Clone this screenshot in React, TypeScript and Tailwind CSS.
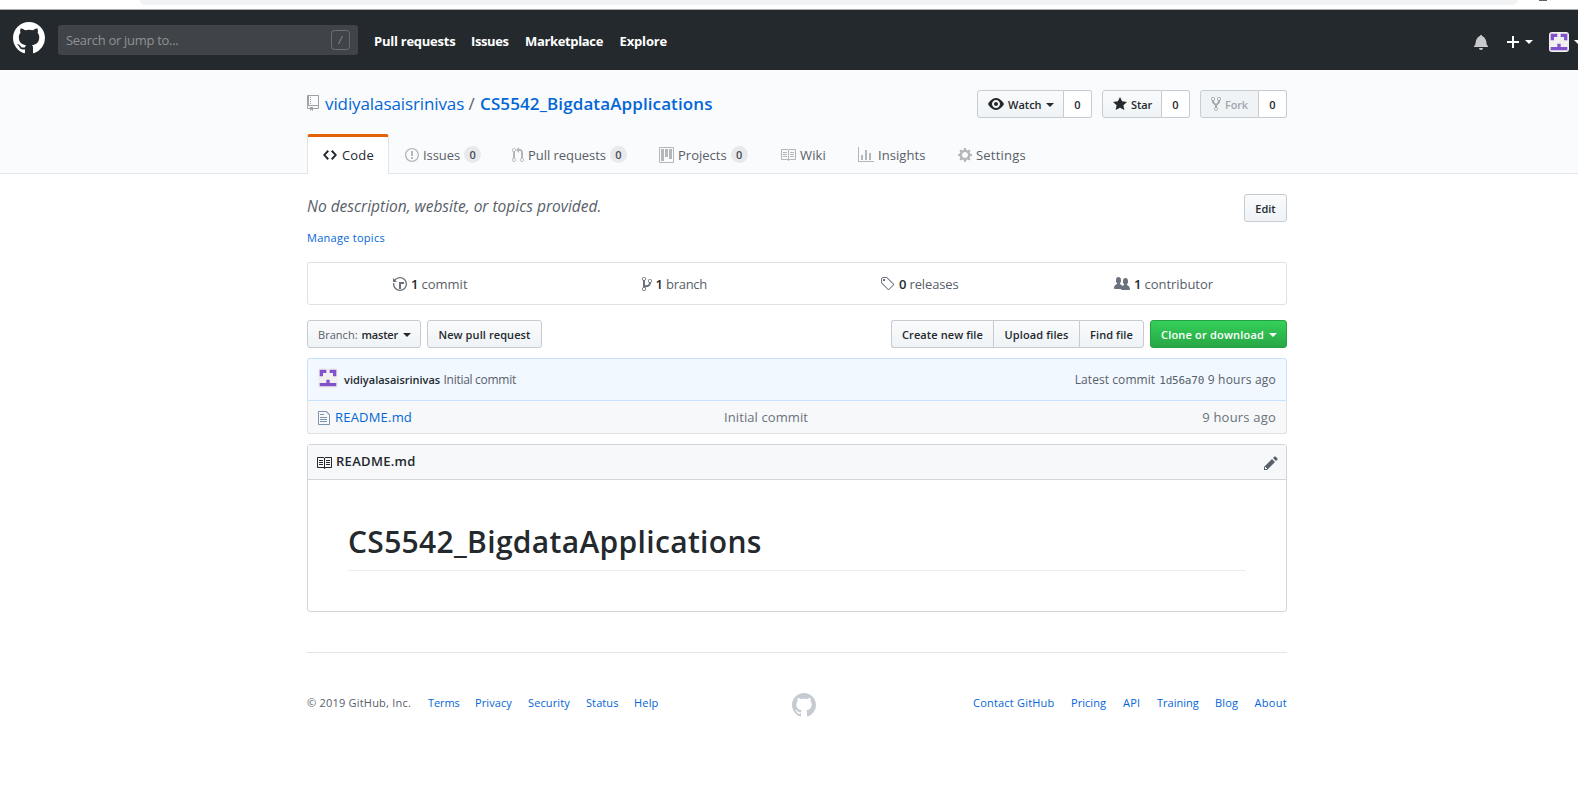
import React from "react";

const ICONS = {
  mark: [16, "M8 0C3.58 0 0 3.58 0 8c0 3.54 2.29 6.53 5.47 7.59.4.07.55-.17.55-.38 0-.19-.01-.82-.01-1.49-2.01.37-2.53-.49-2.69-.94-.09-.23-.48-.94-.82-1.13-.28-.15-.68-.52-.01-.53.63-.01 1.08.58 1.23.82.72 1.21 1.87.87 2.33.66.07-.52.28-.87.51-1.07-1.78-.2-3.64-.89-3.64-3.95 0-.87.31-1.59.82-2.15-.08-.2-.36-1.02.08-2.12 0 0 .67-.21 2.2.82.64-.18 1.32-.27 2-.27.68 0 1.36.09 2 .27 1.53-1.04 2.2-.82 2.2-.82.44 1.1.16 1.92.08 2.12.51.56.82 1.27.82 2.15 0 3.07-1.87 3.75-3.65 3.95.29.25.54.73.54 1.48 0 1.07-.01 1.93-.01 2.2 0 .21.15.46.55.38A8.013 8.013 0 0 0 16 8c0-4.42-3.58-8-8-8z"],
  repo: [12, "M4 9H3V8h1v1zm0-3H3v1h1V6zm0-2H3v1h1V4zm0-2H3v1h1V2zm8-1v12c0 .55-.45 1-1 1H6v2l-1.5-1.5L3 16v-2H1c-.55 0-1-.45-1-1V1c0-.55.45-1 1-1h10c.55 0 1 .45 1 1zm-1 10H1v2h2v-1h3v1h5v-2zm0-10H2v9h9V1z"],
  eye: [16, "M8.06 2C3 2 0 8 0 8s3 6 8.06 6C13 14 16 8 16 8s-3-6-7.94-6zM8 12c-2.2 0-4-1.78-4-4 0-2.2 1.8-4 4-4 2.22 0 4 1.8 4 4 0 2.22-1.78 4-4 4zm2-4c0 1.11-.89 2-2 2-1.11 0-2-.89-2-2 0-1.11.89-2 2-2 1.11 0 2 .89 2 2z"],
  star: [14, "M14 6l-4.9-.64L7 1 4.9 5.36 0 6l3.6 3.26L2.67 14 7 11.67 11.33 14l-.93-4.74L14 6z"],
  fork: [10, "M8 1a1.993 1.993 0 0 0-1 3.72V6L5 8 3 6V4.72A1.993 1.993 0 0 0 2 1a1.993 1.993 0 0 0-1 3.72V6.5l3 3v1.78A1.993 1.993 0 0 0 5 15a1.993 1.993 0 0 0 1-3.72V9.5l3-3V4.72A1.993 1.993 0 0 0 8 1zM2 4.2C1.34 4.2.8 3.65.8 3c0-.65.55-1.2 1.2-1.2.65 0 1.2.55 1.2 1.2 0 .65-.55 1.2-1.2 1.2zm3 10c-.66 0-1.2-.55-1.2-1.2 0-.65.55-1.2 1.2-1.2.65 0 1.2.55 1.2 1.2 0 .65-.55 1.2-1.2 1.2zm3-10c-.66 0-1.2-.55-1.2-1.2 0-.65.55-1.2 1.2-1.2.65 0 1.2.55 1.2 1.2 0 .65-.55 1.2-1.2 1.2z"],
  code: [14, "M9.5 3L8 4.5 11.5 8 8 11.5 9.5 13 14 8 9.5 3zm-5 0L0 8l4.5 5L6 11.5 2.5 8 6 4.5 4.5 3z"],
  issue: [14, "M7 2.3c3.14 0 5.7 2.56 5.7 5.7s-2.56 5.7-5.7 5.7A5.71 5.71 0 0 1 1.3 8c0-3.14 2.56-5.7 5.7-5.7zM7 1C3.14 1 0 4.14 0 8s3.14 7 7 7 7-3.14 7-7-3.14-7-7-7zm1 3H6v5h2V4zm0 6H6v2h2v-2z"],
  pull: [12, "M11 11.28V5c-.03-.78-.34-1.47-.94-2.06C9.46 2.35 8.78 2.03 8 2H7V0L4 3l3 3V4h1c.27.02.48.11.69.31.21.2.3.42.31.69v6.28A1.993 1.993 0 0 0 10 15a1.993 1.993 0 0 0 1-3.72zm-1 2.92c-.66 0-1.2-.55-1.2-1.2 0-.65.55-1.2 1.2-1.2.65 0 1.2.55 1.2 1.2 0 .65-.55 1.2-1.2 1.2zM4 3c0-1.11-.89-2-2-2a1.993 1.993 0 0 0-1 3.72v6.56A1.993 1.993 0 0 0 2 15a1.993 1.993 0 0 0 1-3.72V4.72c.59-.34 1-.98 1-1.72zm-.8 10c0 .66-.55 1.2-1.2 1.2-.65 0-1.2-.55-1.2-1.2 0-.65.55-1.2 1.2-1.2.65 0 1.2.55 1.2 1.2zM2 4.2C1.34 4.2.8 3.65.8 3c0-.65.55-1.2 1.2-1.2.65 0 1.2.55 1.2 1.2 0 .65-.55 1.2-1.2 1.2z"],
  project: [15, "M10 12h3V2h-3v10zm-4-2h3V2H6v8zm-4 4h3V2H2v12zm-1 1h13V1H1v14zM14 0H1a1 1 0 0 0-1 1v14a1 1 0 0 0 1 1h13a1 1 0 0 0 1-1V1a1 1 0 0 0-1-1z"],
  book: [16, "M3 5h4v1H3V5zm0 3h4V7H3v1zm0 2h4V9H3v1zm11-5h-4v1h4V5zm0 2h-4v1h4V7zm0 2h-4v1h4V9zm2-6v9c0 .55-.45 1-1 1H9.5l-1 1-1-1H2c-.55 0-1-.45-1-1V3c0-.55.45-1 1-1h5.5l1 1 1-1H15c.55 0 1 .45 1 1zm-8 .5L7.5 3H2v9h6V3.5zm7-.5H9.5l-.5.5V12h6V3z"],
  graph: [16, "M16 14v1H0V0h1v14h15zM5 13H3V8h2v5zm4 0H7V3h2v10zm4 0h-2V6h2v7z"],
  gear: [14, "M14 8.77v-1.6l-1.94-.64-.45-1.09.88-1.84-1.13-1.13-1.81.91-1.09-.45-.69-1.92h-1.6l-.63 1.94-1.11.45-1.84-.88-1.13 1.13.91 1.81-.45 1.09L0 7.23v1.59l1.94.64.45 1.09-.88 1.84 1.13 1.13 1.81-.91 1.09.45.69 1.92h1.59l.63-1.94 1.11-.45 1.84.88 1.13-1.13-.92-1.81.47-1.09L14 8.75v.02zM7 11c-1.66 0-3-1.34-3-3s1.34-3 3-3 3 1.34 3 3-1.34 3-3 3z"],
  history: [14, "M8 13H6V6h5v2H8v5zM7 1C4.81 1 2.87 2.02 1.59 3.59L0 2v4h4L2.5 4.5C3.55 3.17 5.17 2.3 7 2.3c3.14 0 5.7 2.56 5.7 5.7s-2.56 5.7-5.7 5.7A5.71 5.71 0 0 1 1.3 8c0-.34.03-.67.09-1H.08C.03 7.33 0 7.66 0 8c0 3.86 3.14 7 7 7s7-3.14 7-7-3.14-7-7-7z"],
  branch: [10, "M10 5c0-1.11-.89-2-2-2a1.993 1.993 0 0 0-1 3.72v.3c-.02.52-.23.98-.63 1.38-.4.4-.86.61-1.38.63-.83.02-1.48.16-2 .45V4.72a1.993 1.993 0 0 0-1-3.72C.88 1 0 1.89 0 3a2 2 0 0 0 1 1.72v6.56c-.59.35-1 .99-1 1.72 0 1.11.89 2 2 2 1.11 0 2-.89 2-2 0-.53-.2-1-.53-1.36.09-.06.48-.41.59-.47.25-.11.56-.17.94-.17 1.05-.05 1.95-.45 2.75-1.25S8.95 7.77 9 6.73h-.02C9.59 6.37 10 5.73 10 5zM2 1.8c.66 0 1.2.55 1.2 1.2 0 .65-.55 1.2-1.2 1.2C1.35 4.2.8 3.65.8 3c0-.65.55-1.2 1.2-1.2zm0 12.41c-.66 0-1.2-.55-1.2-1.2 0-.65.55-1.2 1.2-1.2.65 0 1.2.55 1.2 1.2 0 .65-.55 1.2-1.2 1.2zm6-8c-.66 0-1.2-.55-1.2-1.2 0-.65.55-1.2 1.2-1.2.65 0 1.2.55 1.2 1.2 0 .65-.55 1.2-1.2 1.2z"],
  tag: [15, "M7.73 1.73C7.26 1.26 6.62 1 5.96 1H3.5C2.13 1 1 2.13 1 3.5v2.47c0 .66.27 1.3.73 1.77l6.06 6.06c.39.39 1.02.39 1.41 0l4.59-4.59a.996.996 0 0 0 0-1.41L7.73 1.73zM2.38 7.09c-.31-.3-.47-.7-.47-1.13V3.5c0-.88.72-1.59 1.59-1.59h2.47c.42 0 .83.16 1.13.47l6.14 6.13-4.73 4.73-6.13-6.15zM3.01 3h2v2H3V3h.01z"],
  people: [16, "M16 12.999c0 .439-.45 1-1 1H7.995c-.539 0-.994-.447-.995-.999H1c-.54 0-1-.561-1-1 0-2.634 3-4 3-4s.229-.409 0-1c-.841-.621-1.058-.59-1-3 .058-2.419 1.367-3 2.5-3s2.442.58 2.5 3c.058 2.41-.159 2.379-1 3-.229.59 0 1 0 1s1.549.711 2.42 2.088C9.196 9.369 10 8.999 10 8.999s.229-.409 0-1c-.841-.62-1.058-.59-1-3 .058-2.419 1.367-3 2.5-3s2.437.581 2.495 3c.059 2.41-.158 2.38-1 3-.229.59 0 1 0 1s3.005 1.366 3.005 4z"],
  file: [12, "M6 5H2V4h4v1zM2 8h7V7H2v1zm0 2h7V9H2v1zm0 2h7v-1H2v1zm10-7.5V14c0 .55-.45 1-1 1H1c-.55 0-1-.45-1-1V2c0-.55.45-1 1-1h7.5L12 4.5zM11 5L8 2H1v12h10V5z"],
  pencil: [14, "M0 12v3h3l8-8-3-3-8 8zm3 2H1v-2h1v1h1v1zm10.3-9.3L12 6 9 3l1.3-1.3a.996.996 0 0 1 1.41 0l1.59 1.59c.39.39.39 1.02 0 1.41z"],
  bell: [14, "M14 12v1H0v-1l.73-.58c.77-.77.81-2.55 1.19-4.42C2.69 3.23 6 2 6 2c0-.55.45-1 1-1s1 .45 1 1c0 0 3.39 1.23 4.16 5 .38 1.88.42 3.66 1.19 4.42l.66.58H14zm-7 4c1.11 0 2-.89 2-2H5c0 1.11.89 2 2 2z"],
  plus: [12, "M12 9H7v5H5V9H0V7h5V2h2v5h5v2z"],
} as const;

function Icon({ name, size = 16, className = "" }: { name: keyof typeof ICONS; size?: number; className?: string }) {
  const [w, d] = ICONS[name];
  return (
    <svg className={`shrink-0 ${className}`} width={(w * size) / 16} height={size} viewBox={`0 0 ${w} 16`} fill="currentColor" fillRule="evenodd">
      <path d={d} />
    </svg>
  );
}

function Caret({ className = "" }: { className?: string }) {
  return <span className={`h-0 w-0 shrink-0 border-x-4 border-t-4 border-x-transparent border-t-current ${className}`} />;
}

function Avatar({ className = "" }: { className?: string }) {
  return (
    <svg className={`shrink-0 rounded-[3px] bg-[#f0f0f0] ${className}`} width="20" height="20" viewBox="0 0 12 12" fill="#8252cc">
      <path d="M1 1h4v2H3v2H1zM7 1h4v4H9V3H7zM5 7h2v2h4v2H1V9h4z" />
    </svg>
  );
}

function Counter({ className = "" }: { className?: string }) {
  return (
    <span className={`flex h-[17px] w-[17px] shrink-0 items-center justify-center rounded-full bg-[#1b1f23]/8 text-[11px] font-semibold text-[#444d56] ${className}`}>0</span>
  );
}

const BTN = "flex h-7 items-center border border-[#c6cbd1] bg-linear-to-b from-[#fafbfc] to-[#eff3f6] pt-px text-[11px] font-semibold text-[#24292e]";
const COUNT = "flex h-7 items-center justify-center rounded-r-[3px] border border-l-0 border-[#c6cbd1] bg-white pt-px text-[11px] font-semibold";

function Header() {
  return (
    <>
      <div className="flex h-[9px] items-start bg-white pl-[140px]">
        <div className="h-[5px] w-[1378px] rounded-b-[12px] bg-[#f1f3f4]" />
        <div className="ml-[21px] h-px w-[8px] bg-[#5f6368]" />
      </div>
      <div className="h-px bg-[#a9abad]" />
      <header className="flex h-[60px] items-center overflow-hidden bg-[#24292e] pl-[13px] text-white">
        <Icon name="mark" size={32} className="-mt-1" />
        <div className="ml-[13px] flex h-[30px] w-[300px] items-center rounded-[3px] bg-[#404448] pl-2 text-[13px] text-[#8f9295]">
          <span className="w-[265px] tracking-[-0.3px]">Search or jump to...</span>
          <svg width="19" height="20" fill="none" stroke="#6d7073">
            <rect x=".5" y=".5" width="18" height="19" rx="3" />
            <path d="M11.500 6l-4 8" stroke="#85888b" />
          </svg>
        </div>
        <nav className="flex pt-[2px] pl-4 text-[13px] font-bold">
          <span className="w-[97px] tracking-[-0.25px]">Pull requests</span>
          <span className="w-[54px] tracking-[-0.4px]">Issues</span>
          <span className="w-[94.500px] tracking-[-0.35px]">Marketplace</span>
          <span className="tracking-[-0.15px]">Explore</span>
        </nav>
        <div className="ml-auto flex w-[104px] shrink-0 items-center pt-1">
          <Icon name="bell" className="text-[#c8c9ca]" />
          <Icon name="plus" className="ml-[19px]" />
          <Caret className="ml-[6px]" />
          <Avatar className="ml-4" />
          <Caret className="ml-[5px]" />
        </div>
      </header>
    </>
  );
}

function Tab({ icon, label, box, count = false }: { icon: keyof typeof ICONS; label: string; box: string; count?: boolean }) {
  return (
    <span className={`flex items-center ${box}`}>
      <Icon name={icon} className="mt-[2px] mr-1 text-[#b4b7ba]" />
      <span className="pt-[2px]">{label}</span>
      {count && <Counter className="mt-px ml-1" />}
    </span>
  );
}

function RepoHead() {
  return (
    <div className="h-[104px] border-b border-[#e1e4e8] bg-[#fafbfc] pt-5">
      <div className="ml-[307px] w-[980px] text-[#24292e]">
        <div className="flex h-7 justify-between">
          <h1 className="flex h-[27px] items-center text-[17px]">
            <Icon name="repo" className="-mt-px mr-[6px] text-[#9da2a7]" />
            <span className="w-[143.500px] tracking-[-0.1px] text-[#0366d6]">vidiyalasaisrinivas</span>
            <span className="w-[11.500px] text-[#586069]">/</span>
            <span className="font-semibold tracking-[0.11px] text-[#0366d6]">CS5542_BigdataApplications</span>
          </h1>
          <div className="flex">
            <span className={`${BTN} w-[87px] rounded-l-[3px] pl-[10px]`}>
              <Icon name="eye" className="-mt-[2px]" />
              <span className="ml-1 w-[38px]">Watch</span>
              <Caret />
            </span>
            <span className={`${COUNT} w-[28px]`}>0</span>
            <span className={`${BTN} ml-[10px] w-[60px] rounded-l-[3px] pl-[10px]`}>
              <Icon name="star" className="-mt-[2px]" />
              <span className="ml-1 tracking-[-0.13px]">Star</span>
            </span>
            <span className={`${COUNT} w-[28px]`}>0</span>
            <span className="ml-[10px] flex h-7 w-[59px] items-center rounded-l-[3px] border border-[#c9cdd2] bg-[#eff3f6] pt-px pl-[10px] text-[11px] font-semibold text-[#a3a7ab]">
              <Icon name="fork" className="-mt-[2px]" />
              <span className="ml-1 tracking-[-0.16px]">Fork</span>
            </span>
            <span className={`${COUNT} w-[28px]`}>0</span>
          </div>
        </div>
        <div className="mt-4 flex h-10 text-[13px] text-[#586069]">
          <span className="flex h-10 w-[82px] items-center rounded-t-[3px] border-x border-t-[3px] border-x-[#e1e4e8] border-t-[#e36209] bg-white pb-[3px] pl-[15px] text-[#24292e]">
            <Icon name="code" className="mt-[2px] mr-[5px]" />
            <span className="pt-[2px] tracking-[0.18px]">Code</span>
          </span>
          <div className="flex h-10 items-center pl-4">
            <Tab icon="issue" label="Issues" count box="w-[107px] tracking-[-0.08px]" />
            <Tab icon="pull" label="Pull requests" count box="w-[147px] tracking-[-0.05px]" />
            <Tab icon="project" label="Projects" count box="w-[121px]" />
            <Tab icon="book" label="Wiki" box="w-[78px] tracking-[0.15px]" />
            <Tab icon="graph" label="Insights" box="w-[100px] tracking-[0.07px]" />
            <Tab icon="gear" label="Settings" box="tracking-[0.2px]" />
          </div>
        </div>
      </div>
    </div>
  );
}

function Stat({ icon, count, label, box }: { icon: keyof typeof ICONS; count: string; label: string; box: string }) {
  return (
    <span className="flex items-center justify-center pt-px">
      <Icon name={icon} className="mr-1 text-[#6a737d]" />
      <span className="w-[10.500px] pt-px font-semibold text-[#24292e]">{count}</span>
      <span className={`pt-px ${box}`}>{label}</span>
    </span>
  );
}

function Content() {
  return (
    <main className="ml-[307px] w-[980px] text-[#586069]">
      <div className="flex h-[88px] justify-between pt-5">
        <div>
          <p className="flex h-[25px] items-center text-[15.500px] italic">No description, website, or topics provided.</p>
          <p className="mt-[9px] flex h-[18px] items-center text-[11px] tracking-[0.27px] text-[#0366d6]">Manage topics</p>
        </div>
        <span className={`${BTN} w-[43px] justify-center rounded-[3px]`}>Edit</span>
      </div>
      <div className="grid h-[43px] grid-cols-4 rounded-[3px] border border-[#dfe2e5] text-[13px]">
        <Stat icon="history" count="1" label="commit" box="w-[46px]" />
        <Stat icon="branch" count="1" label="branch" box="w-[42px] tracking-[-0.28px]" />
        <Stat icon="tag" count="0" label="releases" box="w-[49px] tracking-[-0.14px]" />
        <Stat icon="people" count="1" label="contributor" box="w-[69px] tracking-[-0.04px]" />
      </div>
      <div className="mt-[15px] flex">
        <span className={`${BTN} w-[114px] rounded-[3px] pl-[10px]`}>
          <span className="w-[43.500px] font-normal tracking-[0.04px] text-[#586069]">Branch:</span>
          <span className="w-[41px] tracking-[-0.2px]">master</span>
          <Caret />
        </span>
        <span className={`${BTN} ml-[6px] w-[115px] justify-center rounded-[3px] tracking-[0.09px]`}>New pull request</span>
        <span className={`${BTN} ml-auto w-[102px] justify-center rounded-l-[3px] border-r-0 tracking-[0.09px]`}>Create new file</span>
        <span className={`${BTN} w-[86px] justify-center border-r-0 tracking-[0.11px]`}>Upload files</span>
        <span className={`${BTN} w-[65px] justify-center rounded-r-[3px] tracking-[0.1px]`}>Find file</span>
        <span className="ml-[6px] flex h-7 w-[137px] items-center rounded-[3px] border border-[#279f43] bg-linear-to-b from-[#34d058] to-[#28a745] pt-px pl-[10px] text-[11px] font-semibold text-white">
          <span className="w-[108px] tracking-[0.19px]">Clone or download</span>
          <Caret />
        </span>
      </div>

      <div className="mt-[10px] flex h-[43px] items-center rounded-t-[3px] border border-[#c8e1ff] bg-[#f1f8ff] px-[10px] text-[12px]">
        <Avatar className="-mt-[3px]" />
        <span className="ml-[6px] w-[99.500px] text-[11px] font-semibold text-[#24292e]">vidiyalasaisrinivas</span>
        <span className="tracking-[-0.28px]">Initial commit</span>
        <span className="ml-auto w-[84.500px] tracking-[0.07px]">Latest commit</span>
        <span className="w-[48.500px] pt-px font-[DejaVu_Sans_Mono,monospace] text-[11px] tracking-[-0.22px]">1d56a70</span>
        <span className="tracking-[0.2px]">9 hours ago</span>
      </div>
      <div className="flex h-[33px] items-center rounded-b-[3px] border border-t-0 border-[#dfe2e5] bg-[#f6f8fa] px-[10px] text-[13px] text-[#6a737d]">
        <Icon name="file" className="mt-[2px] text-[#7d94ae]" />
        <span className="ml-[5px] w-[389px] tracking-[0.2px] text-[#0366d6]">README.md</span>
        <span className="tracking-[0.09px]">Initial commit</span>
        <span className="ml-auto tracking-[0.2px]">9 hours ago</span>
      </div>

      <section className="mt-[10px] h-[168px] rounded-[3px] border border-[#d1d5da] bg-white text-[#24292e]">
        <div className="flex h-[35px] items-center border-b border-[#d1d5da] bg-[#f6f8fa] pr-2 pl-2 text-[13px] font-semibold">
          <Icon name="book" className="mt-[2px] mr-1" />
          <span className="pb-px tracking-[0.3px]">README.md</span>
          <Icon name="pencil" className="mt-px ml-auto text-[#586069]" />
        </div>
        <div className="px-10 pt-10">
          <h1 className="flex h-[51px] items-center border-b border-[#eaecef] pb-[7px] text-[30px] font-semibold tracking-[0.32px]">CS5542_BigdataApplications</h1>
        </div>
      </section>

      <footer className="mt-10 flex h-[90px] items-start justify-between border-t border-[#e1e4e8] pt-10 text-[11px] text-[#0366d6]">
        <div className="flex h-[19px] w-[485px] items-center">
          <span className="w-[121px] tracking-[0.21px] text-[#586069]">© 2019 GitHub, Inc.</span>
          <span className="w-[47px] tracking-[-0.1px]">Terms</span>
          <span className="w-[53px] tracking-[0.1px]">Privacy</span>
          <span className="w-[58px] tracking-[0.13px]">Security</span>
          <span className="w-[48px] tracking-[0.09px]">Status</span>
          <span className="tracking-[0.18px]">Help</span>
        </div>
        <Icon name="mark" size={24} className="text-[#c6cbd1]" />
        <div className="flex h-[19px] w-[471px] items-center justify-end">
          <span className="w-[98px] tracking-[0.2px]">Contact GitHub</span>
          <span className="w-[52px] tracking-[0.05px]">Pricing</span>
          <span className="w-[34px] tracking-[0.25px]">API</span>
          <span className="w-[58px]">Training</span>
          <span className="w-[39.500px] tracking-[0.2px]">Blog</span>
          <span className="tracking-[0.3px]">About</span>
        </div>
      </footer>
    </main>
  );
}

export default function App() {
  return (
    <div className="h-[790px] w-full overflow-hidden bg-white font-[Open_Sans,Noto_Sans,sans-serif] leading-none whitespace-nowrap">
      <Header />
      <RepoHead />
      <Content />
    </div>
  );
}
